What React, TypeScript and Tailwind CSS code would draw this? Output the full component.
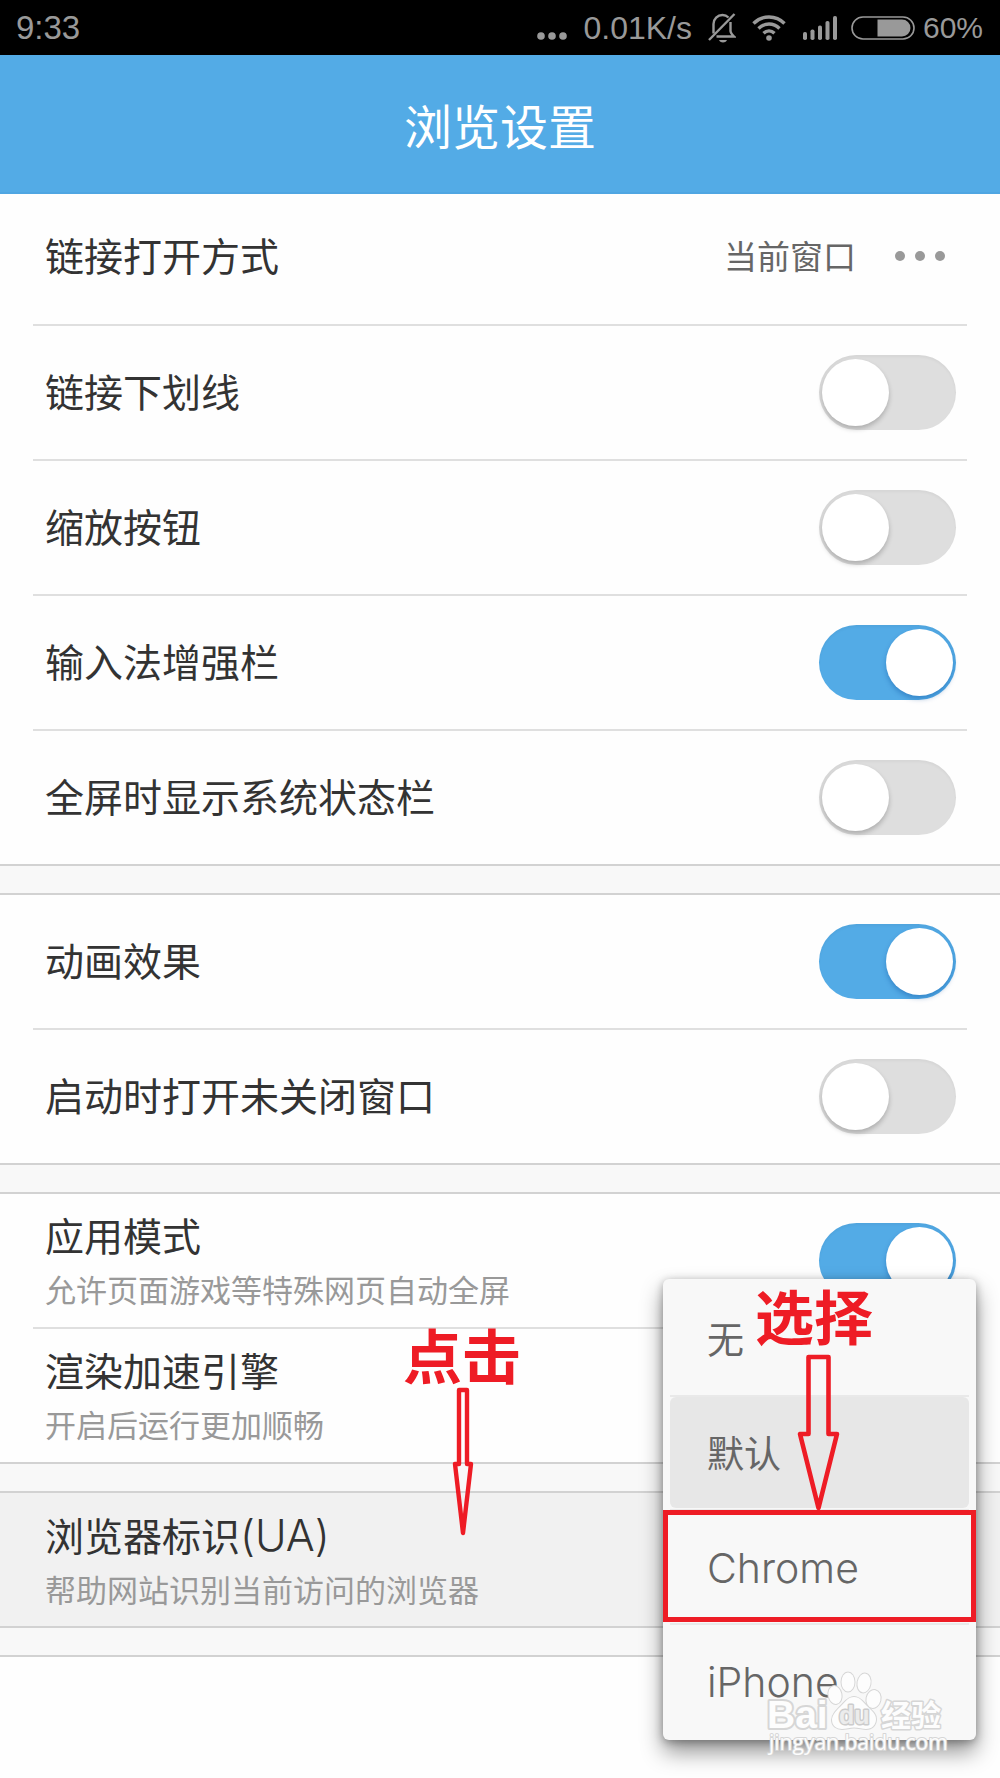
import { useState, type ReactNode } from "react";

function StatusBar() {
  return (
    <div className="flex h-[55px] items-center justify-between bg-black pl-4 pr-[17px] font-['Liberation_Sans',sans-serif] text-[32px] leading-8 text-[#999]">
      <span className="text-[33px]">9:33</span>
      <div className="flex items-center">
        <svg width="30" height="28" viewBox="0 0 30 28" fill="currentColor" className="mr-4" aria-hidden="true">
          <circle cx="4" cy="22" r="3.8" />
          <circle cx="15" cy="22" r="3.8" />
          <circle cx="26" cy="22" r="3.8" />
        </svg>
        <span className="mr-4">0.01K/s</span>
        <svg width="28" height="30" viewBox="0 0 28 30" fill="none" stroke="currentColor" strokeWidth="2.400" className="mr-4" aria-hidden="true">
          <path d="M1 27 26.500 1" />
          <path d="M5.500 20.500V11C5.500 6 9.500 2 14.500 2c2.500 0 4.500 1 6 2.500" />
          <path d="M22.500 9v9c0 2 1.500 3.500 3.500 5.500H8.500" />
          <path d="M11 27h8c-1 1.800-2.300 2.500-4 2.500s-3-.7-4-2.500z" fill="currentColor" stroke="none" />
        </svg>
        <svg width="34" height="28" viewBox="0 0 34 28" fill="none" stroke="currentColor" strokeWidth="3.400" className="mr-4" aria-hidden="true">
          <path d="M1.500 9.500C10 .8 24 .8 32.500 9.500" />
          <path d="M6.500 14.500c6-6 15-6 21 0" />
          <path d="M11.500 19.300c3.300-3.200 7.700-3.200 11 0" />
          <circle cx="17" cy="24" r="2.800" fill="currentColor" stroke="none" />
        </svg>
        <svg width="36" height="26" viewBox="0 0 36 26" fill="currentColor" className="mr-[13px]" aria-hidden="true">
          <rect x="1" y="17" width="4" height="8" rx="1.800" />
          <rect x="8.500" y="14.500" width="4" height="10.500" rx="1.800" />
          <rect x="16" y="10.500" width="4" height="14.500" rx="1.800" />
          <rect x="23.500" y="6" width="4" height="19" rx="1.800" />
          <rect x="31" y="1" width="4" height="24" rx="1.800" />
        </svg>
        <svg width="64" height="26" viewBox="0 0 64 26" className="mr-2" aria-hidden="true">
          <rect x="1" y="2" width="62" height="22" rx="11" fill="none" stroke="currentColor" strokeWidth="1.600" />
          <path d="M26.500 4.500H51a8.500 8.500 0 0 1 0 17H26.500z" fill="currentColor" />
        </svg>
        <span className="text-[30px]">60%</span>
      </div>
    </div>
  );
}

function Group({ children }: { children: ReactNode }) {
  return (
    <>
      <section className="bg-[#fefefe]">{children}</section>
      <div className="h-[31px] border-y-2 border-[#d2d2d2] bg-[#f8f8f8]" />
    </>
  );
}

function Labels({ title, suffix, note }: { title: string; suffix?: string; note?: string }) {
  return (
    <>
      <span className="block text-[39px] leading-[60px] text-[#333]">
        {title}
        {suffix && <span className="text-[43px] font-light">{suffix}</span>}
      </span>
      {note && <span className="block text-[31px] leading-[48px] text-[#999]">{note}</span>}
    </>
  );
}

function ToggleRow({ id, title, note, on = false, last = false }: { id: string; title: string; note?: string; on?: boolean; last?: boolean }) {
  const [checked, setChecked] = useState(on);
  return (
    <div
      className={
        last
          ? "mx-[33px] flex h-[133px] items-center justify-between pl-3 pr-[11px]"
          : "mx-[33px] flex h-[135px] items-center justify-between border-b-2 border-[#dfdfdf] pl-3 pr-[11px]"
      }
    >
      <label htmlFor={id}>
        <Labels title={title} note={note} />
      </label>
      <input
        id={id}
        type="checkbox"
        role="switch"
        checked={checked}
        onChange={(e) => setChecked(e.target.checked)}
        className="flex h-[75px] w-[137px] shrink-0 cursor-pointer appearance-none rounded-full bg-[#dedede] px-[3px] py-1 shadow-[inset_0_2px_3px_rgba(0,0,0,0.04)] before:size-[67px] before:rounded-full before:bg-white before:shadow-[0_3px_5px_rgba(0,0,0,0.22)] before:content-[''] checked:justify-end checked:bg-[#53abe6] checked:before:shadow-[0_3px_5px_rgba(0,70,150,0.35)]"
      />
    </div>
  );
}

const agents = ["无", "默认", "Chrome", "iPhone"];

function AgentMenu() {
  const [selected, setSelected] = useState("默认");
  return (
    <div
      role="menu"
      aria-label="浏览器标识"
      className="absolute -top-[214px] right-6 z-10 w-[313px] rounded-md bg-[#f8f8f8] pb-[3px] pt-[2px] shadow-[0_12px_22px_rgba(0,0,0,0.42),0_2px_8px_rgba(0,0,0,0.3)]"
    >
      {agents.map((name, i) => (
        <div key={name} className={i === 0 ? "mx-[7px] h-[114px] pt-[2px]" : "mx-[7px] h-[114px] border-t-2 border-[#e9e9e9]"}>
          <button
            type="button"
            role="menuitemradio"
            aria-checked={selected === name}
            onClick={() => setSelected(name)}
            className={
              selected === name
                ? "block h-[111px] w-full rounded-md bg-[#e7e7e7] px-[37px] pt-1 text-left text-[#666]"
                : "block h-[111px] w-full rounded-md px-[37px] pt-1 text-left text-[#666]"
            }
          >
            <span className={i < 2 ? "text-[37px]" : "text-[41px] font-light"}>{name}</span>
          </button>
        </div>
      ))}
      <div className="pointer-events-none absolute inset-x-0 top-[231px] h-[112px] border-[5px] border-[#ee1c25]" />
      <div className="pointer-events-none absolute left-[92px] top-[5px] w-[126px] text-[#ee1c25]">
        <span className="block text-[59px] font-bold leading-[70px]">选择</span>
        <svg width="44" height="160" viewBox="0 0 44 160" fill="none" stroke="currentColor" strokeWidth="4.600" strokeLinejoin="round" className="ml-[41px]" aria-hidden="true">
          <path d="M12.500 3h20v77h8.500L22.500 154 4 80h8.500z" />
        </svg>
      </div>
      <Watermark />
    </div>
  );
}

function Watermark() {
  return (
    <svg
      width="190"
      height="90"
      viewBox="0 0 190 90"
      className="pointer-events-none absolute -bottom-[17px] left-[102px]"
      fill="#fdfdfd"
      stroke="#d6d6d6"
      strokeWidth="2"
      strokeLinejoin="round"
      paintOrder="stroke"
      aria-label="Baidu 经验"
    >
      <g>
        <ellipse cx="83" cy="15" rx="6.500" ry="9.500" />
        <ellipse cx="99" cy="16" rx="6.500" ry="9.500" transform="rotate(10 99 16)" />
        <ellipse cx="70" cy="28" rx="6.500" ry="9" transform="rotate(-12 70 28)" />
        <ellipse cx="108.500" cy="32" rx="7" ry="9" transform="rotate(12 108.500 32)" />
        <path d="M89 30c-6 0-9 5-13 9-5 5-9 9-9 14 0 6 5 9 10 9 4 0 8-1.500 12-1.500S98 62 101 62c6 0 10-4 10-10 0-5-4-8-9-13-4-4-7-9-13-9z" />
      </g>
      <g fontFamily="'Liberation Sans', sans-serif" fontWeight="700">
        <text x="2" y="61" fontSize="39" strokeWidth="4">Bai</text>
        <text x="74" y="57" fontSize="25" fill="#ececec" stroke="#cccccc" strokeWidth="3">du</text>
      </g>
      <text x="116" y="59" fontSize="30" fontWeight="700" strokeWidth="3" fontFamily="'Noto Sans CJK SC', sans-serif">经验</text>
      <text x="4" y="83" fontSize="21" strokeWidth="2" fontFamily="'Open Sans', sans-serif">jingyan.baidu.com</text>
    </svg>
  );
}

export default function App() {
  return (
    <div className="min-h-screen overflow-hidden bg-[#fefefe] font-['Inter','Noto_Sans_CJK_SC',sans-serif]" lang="zh-CN">
      <StatusBar />
      <header className="flex h-[139px] items-center justify-center border-b-2 border-[#4fa6e2] bg-[#53abe6] pt-2">
        <h1 className="text-[48px] leading-[60px] text-white">浏览设置</h1>
      </header>
      <main>
        <Group>
          <div className="mx-[33px] flex h-[132px] items-center justify-between border-b-2 border-[#dfdfdf] pb-[5px] pl-3 pr-[21px]">
            <Labels title="链接打开方式" />
            <button type="button" className="flex items-center gap-[38px] text-[33px] leading-[60px] text-[#666]">
              当前窗口
              <svg width="52" height="14" viewBox="0 0 52 14" fill="#999" aria-hidden="true">
                <circle cx="6" cy="6" r="5" />
                <circle cx="26" cy="6" r="5" />
                <circle cx="46" cy="6" r="5" />
              </svg>
            </button>
          </div>
          <ToggleRow id="underline" title="链接下划线" />
          <ToggleRow id="zoom" title="缩放按钮" />
          <ToggleRow id="ime" title="输入法增强栏" on />
          <ToggleRow id="statusbar" title="全屏时显示系统状态栏" last />
        </Group>
        <Group>
          <ToggleRow id="animation" title="动画效果" on />
          <ToggleRow id="restore" title="启动时打开未关闭窗口" last />
        </Group>
        <Group>
          <ToggleRow id="appmode" title="应用模式" note="允许页面游戏等特殊网页自动全屏" on />
          <ToggleRow id="engine" title="渲染加速引擎" note="开启后运行更加顺畅" on last />
        </Group>
        <div className="relative">
          <Group>
            <button type="button" aria-haspopup="menu" className="block h-[133px] w-full bg-[#f1f1f1] pl-[45px] text-left">
              <Labels title="浏览器标识" suffix="(UA)" note="帮助网站识别当前访问的浏览器" />
            </button>
          </Group>
          <div className="pointer-events-none absolute -top-[170px] left-[403px] w-[120px] text-[#ee1c25]">
            <span className="block text-[59px] font-bold leading-[70px]">点击</span>
            <svg width="24" height="152" viewBox="0 0 24 152" fill="none" stroke="currentColor" strokeWidth="4.400" strokeLinejoin="round" className="-mt-[6px] ml-12" aria-hidden="true">
              <path d="M8 3h8v74h4L12 146 4 77h4z" />
            </svg>
          </div>
          <AgentMenu />
        </div>
      </main>
    </div>
  );
}
